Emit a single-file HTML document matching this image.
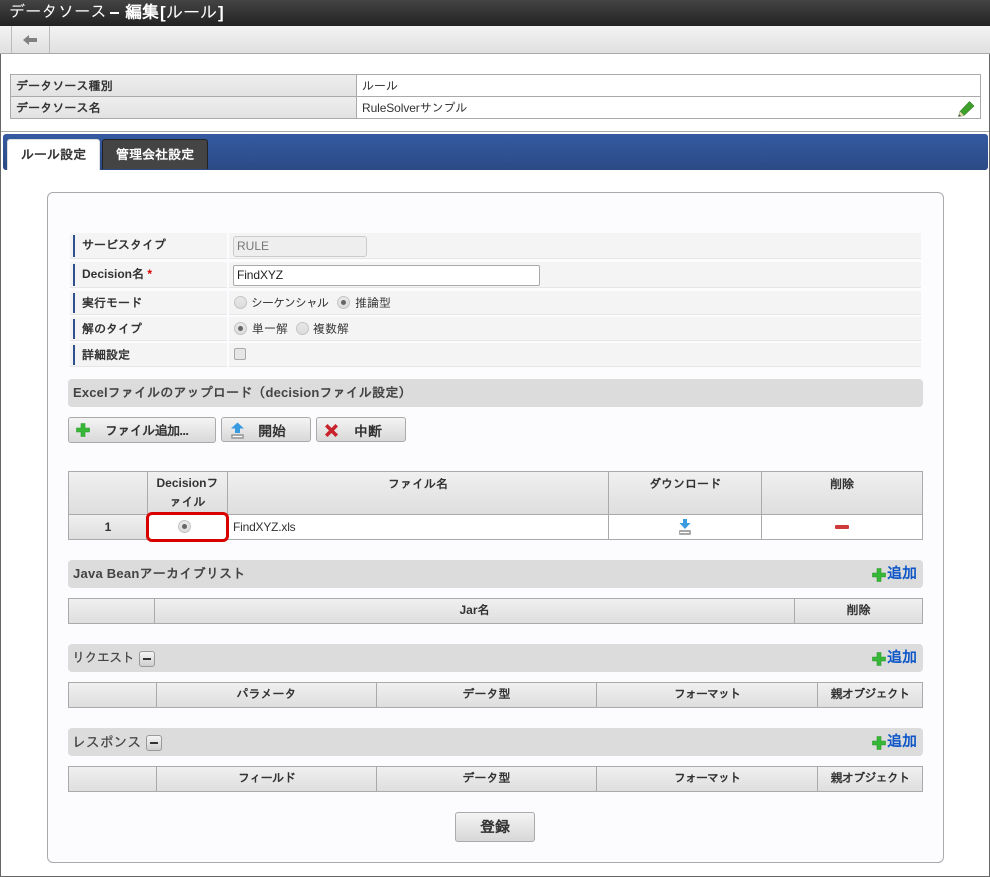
<!DOCTYPE html>
<html lang="ja">
<head>
<meta charset="utf-8">
<title>データソース - 編集</title>
<style>
html,body{margin:0;padding:0;background:#fff}
body{width:990px;height:877px;position:relative;overflow:hidden;font-family:"Liberation Sans","IPAGothic","Noto Sans CJK JP",sans-serif;font-size:12px;color:#333}
div,span,svg{box-sizing:border-box}
.a{position:absolute}
.t{position:absolute;white-space:nowrap;line-height:16px}
.b{font-weight:bold}
.c{text-align:center}
.th{position:absolute;background:linear-gradient(#f0f0f0,#dedede);border:1px solid #aaa;text-align:center;font-weight:bold;font-size:12px;color:#333;line-height:23px}
.h44{line-height:24px}
.td{position:absolute;background:#fff;border:1px solid #aaa}
.lb{position:absolute;left:70px;width:157px;background:#f4f4f4;border-bottom:1px solid #e6e6e6}
.lb i{position:absolute;left:3px;top:2px;bottom:1px;width:2px;background:#2f4f8f}
.lb span{position:absolute;left:12px;top:4px;font-weight:bold;font-size:12px;line-height:16px;white-space:nowrap}
.vl{position:absolute;left:229px;width:692px;background:#f4f4f4;border-bottom:1px solid #e6e6e6}
.sec{position:absolute;left:68px;width:855px;height:28px;background:#dcdcdc;border-radius:4px}
.btn{position:absolute;border:1px solid #aaa;border-radius:3px;background:linear-gradient(#f4f4f4,#d8d8d8);font-weight:bold;font-size:12px;line-height:24px}
.r{position:absolute;width:13px;height:13px;border-radius:50%;border:1px solid #c4c4c4;background:linear-gradient(#e8e8e8,#dcdcdc)}
.r.on:after{content:"";position:absolute;left:3px;top:3px;width:5px;height:5px;border-radius:50%;background:#666}
.add{position:absolute;left:887px;font-size:15px;font-weight:bold;color:#0d56c8;line-height:16px;white-space:nowrap}
.mini{position:absolute;width:16px;height:16px;border:1px solid #999;border-radius:3px;background:linear-gradient(#f4f4f4,#cfcfcf)}
.mini:after{content:"";position:absolute;left:3px;top:6px;width:8px;height:2px;background:#333}
</style>
</head>
<body>
<!-- page frame -->
<div class="a" style="left:0;top:0;width:1px;height:877px;background:#666"></div>
<div class="a" style="left:989px;top:0;width:1px;height:877px;background:#666"></div>
<div class="a" style="left:0;top:876px;width:990px;height:1px;background:#666"></div>

<!-- title bar -->
<div class="a" style="left:0;top:0;width:990px;height:26px;background:linear-gradient(#444,#222)"></div>
<div class="t" style="left:9px;top:4px;font-size:16px;line-height:18px;color:#fff;letter-spacing:.3px">データソース</div>
<div class="a" style="left:110px;top:12px;width:9px;height:2px;background:#fff"></div>
<div class="t b" style="left:125px;top:4px;font-size:17px;line-height:18px;color:#fff">編集</div>
<div class="t b" style="left:160px;top:4px;font-size:17px;line-height:18px;color:#fff">[</div>
<div class="t" style="left:166px;top:4px;font-size:17px;line-height:18px;color:#fff">ルール</div>
<div class="t b" style="left:218px;top:4px;font-size:17px;line-height:18px;color:#fff">]</div>

<!-- toolbar -->
<div class="a" style="left:0;top:26px;width:990px;height:28px;background:linear-gradient(#f3f3f3,#e0e0e0);border-bottom:1px solid #aaa"></div>
<div class="a" style="left:11px;top:26px;width:39px;height:27px;border-left:1px solid #bbb;border-right:1px solid #bbb"></div>
<svg class="a" style="left:23px;top:34px" width="14" height="12" viewBox="0 0 14 12"><path d="M0 6 6 1V4H14V8H6V11Z" fill="#808080"/></svg>

<!-- info table -->
<div class="a" style="left:10px;top:74px;width:971px;height:45px;background:#fff;border:1px solid #aaa"></div>
<div class="a" style="left:11px;top:75px;width:346px;height:43px;background:linear-gradient(#eee,#e2e2e2 50%,#eee 50%,#e2e2e2);border-right:1px solid #aaa"></div>
<div class="a" style="left:11px;top:96px;width:969px;height:1px;background:#aaa"></div>
<div class="t b" style="left:16px;top:78px;font-size:12px;letter-spacing:.1px">データソース種別</div>
<div class="t b" style="left:16px;top:100px;font-size:12px;letter-spacing:.1px">データソース名</div>
<div class="t" style="left:362px;top:78px">ルール</div>
<div class="t" style="left:362px;top:100px;letter-spacing:-.1px">RuleSolverサンプル</div>
<svg class="a" style="left:957px;top:100px" width="18" height="18" viewBox="0 0 18 18"><path d="M1.500 16.500 3 11.500 12.500 1.500 17 6 7 15.500Z" fill="#3fa02c" stroke="#2f7d20" stroke-width=".6"/><path d="M1.500 16.500 3 11.500 7 15.500Z" fill="#ecd9b4"/><path d="M1.500 16.500 2.200 14.200 4 15.900Z" fill="#444"/></svg>

<!-- tab bar -->
<div class="a" style="left:1px;top:131px;width:988px;height:1px;background:#aaa"></div>
<div class="a" style="left:3px;top:134px;width:985px;height:36px;background:linear-gradient(#355aa2,#2b4a85);border-radius:3px"></div>
<div class="a" style="left:7px;top:139px;width:93px;height:31px;background:#fff;border:1px solid #ddd;border-bottom:0;border-radius:3px 3px 0 0"></div>
<div class="t b" style="left:21px;top:147px;font-size:13px;color:#333">ルール設定</div>
<div class="a" style="left:102px;top:139px;width:106px;height:30px;background:#444;border:1px solid #222;border-bottom:0;border-radius:3px 3px 0 0"></div>
<div class="t b" style="left:116px;top:147px;font-size:13px;color:#fff">管理会社設定</div>

<!-- panel -->
<div class="a" style="left:47px;top:192px;width:897px;height:671px;background:#fcfcfe;border:1px solid #aaa;border-radius:6px"></div>

<!-- form rows -->
<div class="lb" style="top:233px;height:26px"><i></i><span>サービスタイプ</span></div>
<div class="vl" style="top:233px;height:26px"></div>
<div class="a" style="left:233px;top:236px;width:134px;height:21px;background:#eee;border:1px solid #ccc;border-radius:3px;color:#777;padding-left:3px;line-height:19px">RULE</div>

<div class="lb" style="top:262px;height:26px"><i></i><span>Decision名 <b style="color:#d00">*</b></span></div>
<div class="vl" style="top:262px;height:26px"></div>
<div class="a" style="left:233px;top:265px;width:307px;height:21px;background:#fff;border:1px solid #aaa;border-radius:2px;color:#222;padding-left:3px;line-height:19px;letter-spacing:-.1px">FindXYZ</div>

<div class="lb" style="top:291px;height:24px"><i></i><span>実行モード</span></div>
<div class="vl" style="top:291px;height:24px"></div>
<div class="r" style="left:234px;top:296px"></div>
<div class="t" style="left:251px;top:295px;letter-spacing:-1px">シーケンシャル</div>
<div class="r on" style="left:337px;top:296px"></div>
<div class="t" style="left:355px;top:295px">推論型</div>

<div class="lb" style="top:317px;height:24px"><i></i><span>解のタイプ</span></div>
<div class="vl" style="top:317px;height:24px"></div>
<div class="r on" style="left:234px;top:322px"></div>
<div class="t" style="left:252px;top:321px">単一解</div>
<div class="r" style="left:296px;top:322px"></div>
<div class="t" style="left:313px;top:321px">複数解</div>

<div class="lb" style="top:343px;height:24px"><i></i><span>詳細設定</span></div>
<div class="vl" style="top:343px;height:24px"></div>
<div class="a" style="left:234px;top:348px;width:12px;height:12px;border:1px solid #aaa;border-radius:2px;background:#e6e6e6"></div>

<!-- excel section -->
<div class="sec" style="top:379px"></div>
<div class="t b" style="left:73px;top:385px;font-size:13px;color:#444;letter-spacing:.15px">Excelファイルのアップロード（decisionファイル設定）</div>

<div class="btn" style="left:68px;top:417px;width:148px;height:26px"></div>
<svg class="a" style="left:76px;top:423px" width="14" height="14" viewBox="0 0 14 14"><path d="M5 .5H9V5H13.500V9H9V13.500H5V9H.5V5H5Z" fill="#37b637" stroke="#2a9a2a" stroke-width=".6"/></svg>
<div class="t b" style="left:105px;top:423px;font-size:13px;letter-spacing:-.6px">ファイル追加...</div>

<div class="btn" style="left:221px;top:417px;width:90px;height:25px"></div>
<svg class="a" style="left:230px;top:422px" width="15" height="18" viewBox="0 0 15 18"><path d="M7.500 .5 14 6.500H10V11H5V6.500H1Z" fill="#3a9be0"/><rect x="1" y="12" width="13" height="5" rx="1" fill="#a8a8a8"/><rect x="3" y="14" width="9" height="1" fill="#fff"/></svg>
<div class="t b" style="left:258px;top:423px;font-size:14px">開始</div>

<div class="btn" style="left:316px;top:417px;width:90px;height:25px"></div>
<svg class="a" style="left:325px;top:424px" width="13" height="13" viewBox="0 0 13 13"><path d="M0 2.500 2.500 0 6.500 4 10.500 0 13 2.500 9 6.500 13 10.500 10.500 13 6.500 9 2.500 13 0 10.500 4 6.500Z" fill="#c8232c"/></svg>
<div class="t b" style="left:354px;top:423px;font-size:14px">中断</div>

<!-- file table -->
<div class="th" style="left:68px;top:471px;width:80px;height:44px"></div>
<div class="th" style="left:147px;top:471px;width:81px;height:44px;line-height:19px;padding-top:2px">Decisionフ<br>ァイル</div>
<div class="th h44" style="left:227px;top:471px;width:382px;height:44px">ファイル名</div>
<div class="th h44" style="left:608px;top:471px;width:154px;height:44px">ダウンロード</div>
<div class="th h44" style="left:761px;top:471px;width:162px;height:44px">削除</div>
<div class="th" style="left:68px;top:514px;width:80px;height:26px;line-height:24px">1</div>
<div class="td" style="left:147px;top:514px;width:81px;height:26px"></div>
<div class="td" style="left:227px;top:514px;width:382px;height:26px"></div>
<div class="td" style="left:608px;top:514px;width:154px;height:26px"></div>
<div class="td" style="left:761px;top:514px;width:162px;height:26px"></div>
<div class="t" style="left:233px;top:519px;letter-spacing:-.2px">FindXYZ.xls</div>
<div class="r on" style="left:178px;top:520px"></div>
<div class="a" style="left:146px;top:512px;width:83px;height:30px;border:3px solid #d90000;border-radius:6px"></div>
<svg class="a" style="left:678px;top:519px" width="14" height="17" viewBox="0 0 14 17"><path d="M5 0H9V4H12.500L7 10 1.500 4H5Z" fill="#3a9be0"/><rect x="1" y="11" width="12" height="5" rx="1" fill="#a8a8a8"/><rect x="2" y="13" width="9" height="1" fill="#fff"/></svg>
<div class="a" style="left:835px;top:525px;width:14px;height:4px;background:#cc3a3a;border-radius:1px"></div>

<!-- java bean -->
<div class="sec" style="top:560px"></div>
<div class="t b" style="left:73px;top:566px;font-size:13px;color:#444;letter-spacing:.25px">Java Beanアーカイブリスト</div>
<svg class="a" style="left:872px;top:568px" width="14" height="14" viewBox="0 0 14 14"><path d="M5 .5H9V5H13.500V9H9V13.500H5V9H.5V5H5Z" fill="#37b637" stroke="#2a9a2a" stroke-width=".6"/></svg>
<div class="add" style="top:566px">追加</div>
<div class="th" style="left:68px;top:598px;width:87px;height:26px"></div>
<div class="th" style="left:154px;top:598px;width:641px;height:26px">Jar名</div>
<div class="th" style="left:794px;top:598px;width:129px;height:26px">削除</div>

<!-- request -->
<div class="sec" style="top:644px"></div>
<div class="t" style="left:72px;top:650px;font-size:13px;color:#444;letter-spacing:-.6px;-webkit-text-stroke:.2px #444">リクエスト</div>
<div class="mini" style="left:139px;top:651px"></div>
<svg class="a" style="left:872px;top:652px" width="14" height="14" viewBox="0 0 14 14"><path d="M5 .5H9V5H13.500V9H9V13.500H5V9H.5V5H5Z" fill="#37b637" stroke="#2a9a2a" stroke-width=".6"/></svg>
<div class="add" style="top:650px">追加</div>
<div class="th" style="left:68px;top:682px;width:89px;height:26px"></div>
<div class="th" style="left:156px;top:682px;width:221px;height:26px">パラメータ</div>
<div class="th" style="left:376px;top:682px;width:221px;height:26px">データ型</div>
<div class="th" style="left:596px;top:682px;width:222px;height:26px;letter-spacing:-1px">フォーマット</div>
<div class="th" style="left:817px;top:682px;width:106px;height:26px;letter-spacing:-.8px">親オブジェクト</div>

<!-- response -->
<div class="sec" style="top:728px"></div>
<div class="t" style="left:72px;top:734px;font-size:14px;color:#444;letter-spacing:-.2px;-webkit-text-stroke:.2px #444">レスポンス</div>
<div class="mini" style="left:146px;top:735px"></div>
<svg class="a" style="left:872px;top:736px" width="14" height="14" viewBox="0 0 14 14"><path d="M5 .5H9V5H13.500V9H9V13.500H5V9H.5V5H5Z" fill="#37b637" stroke="#2a9a2a" stroke-width=".6"/></svg>
<div class="add" style="top:734px">追加</div>
<div class="th" style="left:68px;top:766px;width:89px;height:26px"></div>
<div class="th" style="left:156px;top:766px;width:221px;height:26px;letter-spacing:-.6px">フィールド</div>
<div class="th" style="left:376px;top:766px;width:221px;height:26px">データ型</div>
<div class="th" style="left:596px;top:766px;width:222px;height:26px;letter-spacing:-1px">フォーマット</div>
<div class="th" style="left:817px;top:766px;width:106px;height:26px;letter-spacing:-.8px">親オブジェクト</div>

<!-- submit -->
<div class="btn c" style="left:455px;top:812px;width:80px;height:30px;font-size:15px;line-height:29px">登録</div>
</body>
</html>
